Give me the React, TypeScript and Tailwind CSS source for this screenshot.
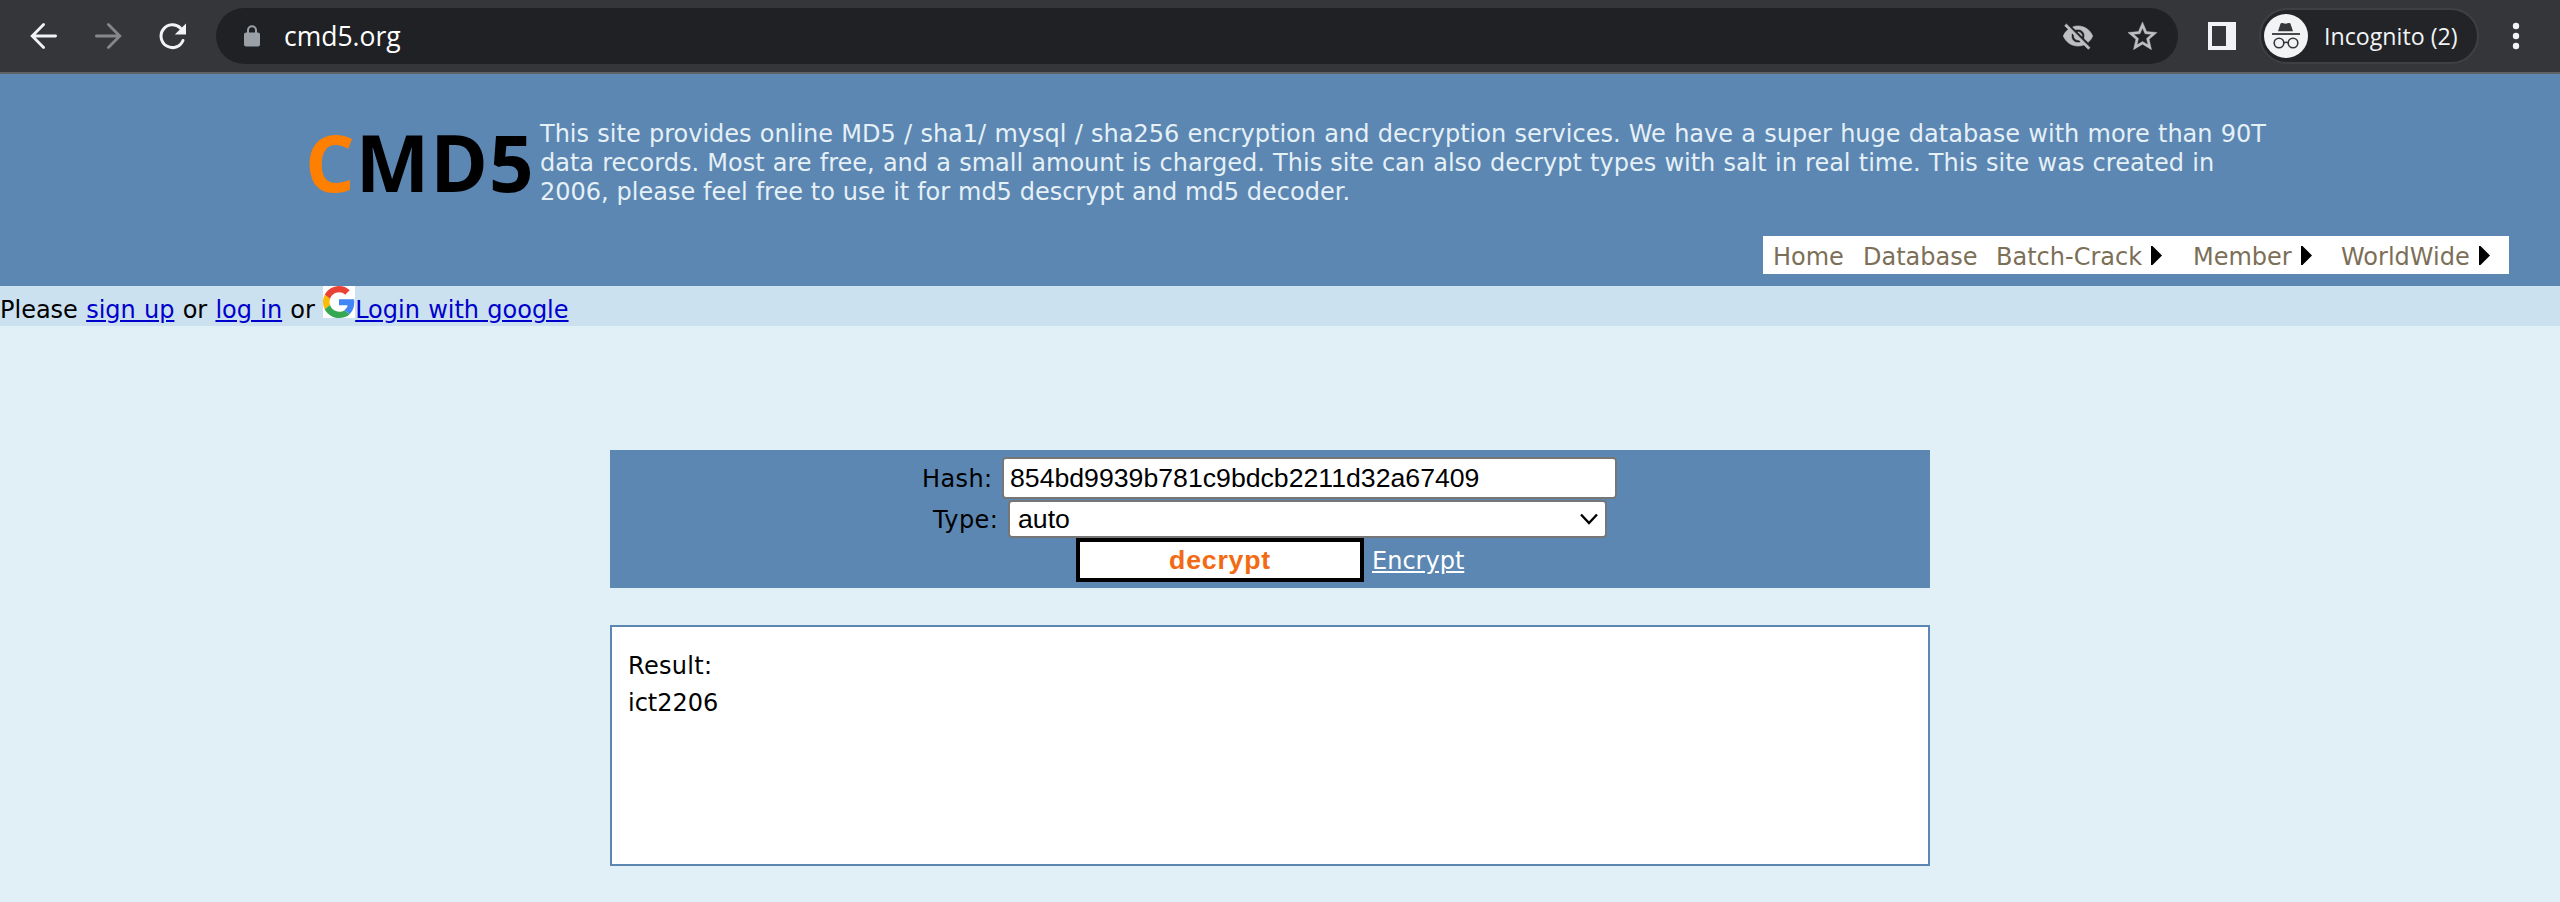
import React from 'react';

const verdana = "font-['DejaVu_Sans',sans-serif]";

function Toolbar() {
  return (
    <div className="flex h-[74px] items-center border-b-2 border-[#606164] bg-[#35363a] font-['Open_Sans',sans-serif]">
      <svg className="ml-[28px] h-8 w-8 shrink-0" viewBox="0 0 32 32" fill="none" stroke="#f1f3f4" strokeWidth="2.8" strokeLinecap="round">
        <path d="M27.6 16H4.6M15.6 4.6L4.2 16l11.4 11.4" />
      </svg>
      <svg className="ml-8 h-8 w-8 shrink-0" viewBox="0 0 32 32" fill="none" stroke="#86878a" strokeWidth="2.8" strokeLinecap="round">
        <path d="M4.4 16h23M16.4 4.6L27.8 16 16.4 27.4" />
      </svg>
      <svg className="ml-8 h-8 w-8 shrink-0" viewBox="0 0 32 32">
        <path d="M27 20.5A11.4 11.4 0 1 1 24.5 8.1" fill="none" stroke="#f1f3f4" strokeWidth="3" strokeLinecap="round" />
        <path d="M30 3.4v11H18.8z" fill="#f1f3f4" />
      </svg>
      <div className="ml-[28px] flex h-14 w-[1962px] shrink-0 items-center rounded-full bg-[#202124]">
        <svg className="ml-[28px] h-[22px] w-4" viewBox="0 0 16 22">
          <rect y="7.5" width="16" height="14" rx="2" fill="#9aa0a6" />
          <path d="M4 8V5.2a4 4 0 0 1 8 0V8" fill="none" stroke="#9aa0a6" strokeWidth="2" />
        </svg>
        <span className="ml-6 text-[26.5px] leading-9 text-white">cmd5.org</span>
        <svg className="ml-auto h-8 w-8" viewBox="0 0 24 24" fill="#bdbfc3" stroke="#bdbfc3" strokeWidth="0.5">
          <path d="M12 7c2.76 0 5 2.24 5 5 0 .65-.13 1.26-.36 1.83l2.92 2.92c1.51-1.26 2.7-2.89 3.43-4.75-1.73-4.39-6-7.5-11-7.5-1.4 0-2.74.25-3.98.7l2.16 2.16C10.74 7.13 11.35 7 12 7zM2 4.27l2.28 2.28.46.46C3.08 8.3 1.78 10.02 1 12c1.73 4.39 6 7.5 11 7.5 1.55 0 3.03-.3 4.38-.84l.42.42L19.73 22 21 20.73 3.27 3 2 4.27zM7.53 9.8l1.55 1.55c-.05.21-.08.43-.08.65 0 1.66 1.34 3 3 3 .22 0 .44-.03.65-.08l1.55 1.55c-.67.33-1.41.53-2.2.53-2.76 0-5-2.24-5-5 0-.79.2-1.53.53-2.2zm4.31-.78l3.15 3.15.02-.16c0-1.66-1.34-3-3-3l-.17.01z" />
        </svg>
        <svg className="mr-[18px] ml-[31px] h-[35px] w-[35px]" viewBox="0 0 24 24" fill="#bdbfc3" stroke="#bdbfc3" strokeWidth="0.3">
          <path d="M22 9.24l-7.19-.62L12 2 9.19 8.63 2 9.24l5.46 4.73L5.82 21 12 17.27 18.18 21l-1.63-7.03L22 9.24zM12 15.4l-3.76 2.27 1-4.28-3.32-2.88 4.38-.38L12 6.1l1.71 4.04 4.38.38-3.32 2.88 1 4.28L12 15.4z" />
        </svg>
      </div>
      <svg className="ml-[30px] h-7 w-7 shrink-0" viewBox="0 0 28 28">
        <path fillRule="evenodd" d="M0 0h28v28H0zM4 4v20h14V4z" fill="#f1f3f4" />
      </svg>
      <div className="ml-[23px] flex h-14 w-[220px] shrink-0 items-center rounded-full border-2 border-[#3f4044] bg-[#232428]">
        <svg className="ml-[3px] h-11 w-11 shrink-0" viewBox="0 0 44 44">
          <circle cx="22" cy="22" r="22" fill="#f1f3f4" />
          <path d="M14 17.2l2.5-7.4q.5-1.2 1.7-.8l3.3.7 3.3-.7q1.2-.4 1.7.8l2.5 7.4z" fill="#35363a" />
          <path d="M8 20h28" stroke="#35363a" strokeWidth="1.8" />
          <g fill="none" stroke="#35363a" strokeWidth="1.6">
            <circle cx="15" cy="29" r="4.8" />
            <circle cx="29" cy="29" r="4.8" />
            <path d="M19.8 28.8q2.2-1 4.4 0" />
          </g>
        </svg>
        <span className="ml-4 text-[23.2px] whitespace-nowrap text-[#f1f3f4]">Incognito (2)</span>
      </div>
      <svg className="ml-[33px] h-8 w-2 shrink-0" viewBox="0 0 8 32" fill="#f1f3f4">
        <circle cx="4" cy="6" r="3.2" />
        <circle cx="4" cy="16" r="3.2" />
        <circle cx="4" cy="26" r="3.2" />
      </svg>
    </div>
  );
}

function Arrow() {
  return (
    <svg className="mt-[-2px] ml-[9px] h-[19px] w-3" viewBox="0 0 12 19">
      <path d="M0 0h1.5L11 9.5 1.5 19H0z" fill="#000" />
    </svg>
  );
}

function Header() {
  return (
    <header className="flex h-[212px] flex-col bg-[#5b87b2]">
      <div className="flex pt-[46px] pl-[305px]">
        <div className="mt-[-11px] h-[106px] w-[235px] shrink-0 font-['Open_Sans',sans-serif] text-[78px] leading-[106px] font-bold tracking-[1px] whitespace-nowrap text-black">
          <span className="text-[#ff8000]">C</span>MD5
        </div>
        <div className="text-[24px] leading-[29px] whitespace-nowrap text-[#e6f0f7]">
          <p className="[word-spacing:0.64px]">
            This site provides online MD5 / sha1/ mysql / sha256 encryption and decryption services. We have a super huge database with more than 90T
          </p>
          <p className="[word-spacing:0.57px]">
            data records. Most are free, and a small amount is charged. This site can also decrypt types with salt in real time. This site was created in
          </p>
          <p className="[word-spacing:0.25px]">2006, please feel free to use it for md5 descrypt and md5 decoder.</p>
        </div>
      </div>
      <nav className="mt-auto mr-[51px] mb-3 ml-auto flex h-[38px] w-[746px] items-center bg-white pt-[3px] pl-[10px] text-[24px] whitespace-nowrap text-[#7c6f57]">
        <a className="w-[90px]">Home</a>
        <a className="w-[133px]">Database</a>
        <a className="flex w-[197px] items-center">Batch-Crack<Arrow /></a>
        <a className="flex w-[148px] items-center">Member<Arrow /></a>
        <a className="flex items-center">WorldWide<Arrow /></a>
      </nav>
    </header>
  );
}

function GoogleMark() {
  return (
    <svg className="h-8 w-8 bg-white" viewBox="0 0 48 48">
      <path fill="#EA4335" d="M24 9.5c3.54 0 6.71 1.22 9.21 3.6l6.85-6.85C35.9 2.38 30.47 0 24 0 14.62 0 6.51 5.38 2.56 13.22l7.98 6.19C12.43 13.72 17.74 9.5 24 9.5z" />
      <path fill="#4285F4" d="M46.98 24.55c0-1.57-.15-3.09-.38-4.55H24v9.02h12.94c-.58 2.96-2.26 5.48-4.78 7.18l7.73 6c4.51-4.18 7.09-10.36 7.09-17.65z" />
      <path fill="#FBBC05" d="M10.53 28.59c-.48-1.45-.76-2.99-.76-4.59s.27-3.14.76-4.59l-7.98-6.19C.92 16.46 0 20.12 0 24c0 3.88.92 7.54 2.56 10.78l7.97-6.19z" />
      <path fill="#34A853" d="M24 48c6.48 0 11.93-2.13 15.89-5.81l-7.73-6c-2.15 1.45-4.92 2.3-8.16 2.3-6.26 0-11.57-4.22-13.47-9.91l-7.98 6.19C6.51 42.62 14.62 48 24 48z" />
    </svg>
  );
}

export default function App() {
  return (
    <div className="h-[902px] w-[2560px] overflow-hidden bg-[#e1eff7] text-black">
      <Toolbar />
      <div className={verdana}>
        <Header />
        <div className="flex h-10 items-start bg-[#cbe1ef] text-[24px] leading-[29px] whitespace-pre [word-spacing:0.6px]">
          <span className="mt-[10px]">Please </span>
          <a className="mt-[10px] text-[#0000cc] underline">sign up</a>
          <span className="mt-[10px]"> or </span>
          <a className="mt-[10px] text-[#0000cc] underline">log in</a>
          <span className="mt-[10px]"> or </span>
          <GoogleMark />
          <a className="mt-[10px] text-[#0000cc] underline">Login with google</a>
        </div>
        <main className="ml-[610px] w-[1320px] pt-[124px]">
          <form className="flex h-[138px] flex-col bg-[#5b87b2] pt-[7px] text-[24px]">
            <div className="flex h-[43px] pl-[312px]">
              <label className="w-[80px] pt-1 tracking-[0.4px]">Hash:</label>
              <div className="h-[42px] w-[615px] rounded-[4px] border-2 border-[#767676] bg-white pl-[6px] font-['Liberation_Sans',sans-serif] text-[26.67px] leading-[38px]">
                854bd9939b781c9bdcb2211d32a67409
              </div>
            </div>
            <div className="flex h-[38px] pl-[323px]">
              <label className="w-[75px] pt-[2px] leading-9 tracking-[0.4px]">Type:</label>
              <div className="flex h-[38px] w-[599px] items-center rounded-[4px] border-2 border-[#767676] bg-white pr-[7px] pl-[8px] font-['Liberation_Sans',sans-serif] text-[26.67px] leading-[34px]">
                auto
                <svg className="ml-auto h-[12px] w-[18px]" viewBox="0 0 18 12">
                  <path d="M1 1.5l8 8.5 8-8.5" fill="none" stroke="#000" strokeWidth="2.4" />
                </svg>
              </div>
            </div>
            <div className="flex h-[44px] pl-[466px]">
              <div className="h-[44px] w-[288px] border-4 border-black bg-white text-center font-['Liberation_Sans',sans-serif] text-[26.67px] leading-[36px] font-bold tracking-[0.8px] text-[#f26a12]">
                decrypt
              </div>
              <a className="ml-2 pt-[5px] text-white underline">Encrypt</a>
            </div>
          </form>
          <section className="mt-[37px] h-[241px] border-2 border-[#5b87b2] bg-white pt-[21px] pl-4 text-[24px] leading-[37px]">
            <p className="tracking-[0.3px]">Result:</p>
            <p>ict2206</p>
          </section>
        </main>
      </div>
    </div>
  );
}
